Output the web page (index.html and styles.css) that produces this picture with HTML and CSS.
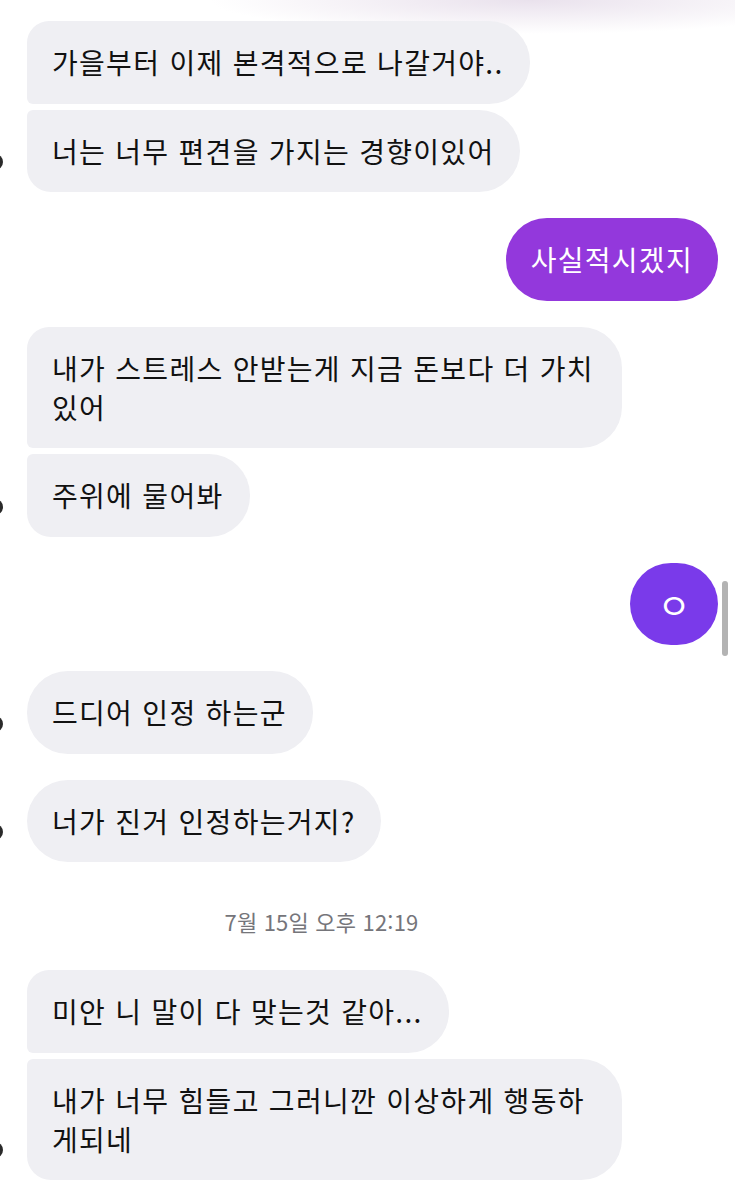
FILE: index.html
```html
<!DOCTYPE html>
<html lang="ko">
<head>
    <meta charset="UTF-8">
    <meta name="viewport" content="width=device-width, initial-scale=1.0">
    <title>메시지</title>
    <link rel="stylesheet" href="styles.css">
</head>
<body>

<div class="thread">
    <div class="row in">
        <span class="avatar blank"></span>
        <div class="bubble first">가을부터 이제 본격적으로 나갈거야..</div>
    </div>
    <div class="row in cont">
        <span class="avatar"></span>
        <div class="bubble last">너는 너무 편견을 가지는 경향이있어</div>
    </div>

    <div class="row out">
        <div class="bubble mine">사실적시겠지</div>
    </div>

    <div class="row in">
        <span class="avatar blank"></span>
        <div class="bubble first">내가 스트레스 안받는게 지금 돈보다 더 가치 있어</div>
    </div>
    <div class="row in cont">
        <span class="avatar"></span>
        <div class="bubble last">주위에 물어봐</div>
    </div>

    <div class="row out">
        <div class="bubble mine dot">ㅇ</div>
    </div>

    <div class="row in">
        <span class="avatar"></span>
        <div class="bubble">드디어 인정 하는군</div>
    </div>

    <div class="row in">
        <span class="avatar"></span>
        <div class="bubble">너가 진거 인정하는거지?</div>
    </div>

    <div class="stamp">7월 15일 오후 12:19</div>

    <div class="row in">
        <span class="avatar blank"></span>
        <div class="bubble first">미안 니 말이 다 맞는것 같아...</div>
    </div>
    <div class="row in cont">
        <span class="avatar"></span>
        <div class="bubble last">내가 너무 힘들고 그러니깐 이상하게 행동하게되네</div>
    </div>
</div>

<div class="scrollbar"></div>

</body>
</html>
```

FILE: styles.css
```css
body, html {
    margin: 0;
    padding: 0;
    background: #fff;
    font-family: "Noto Sans CJK KR", "Noto Sans", sans-serif;
    color: #111;
    overflow: hidden;
}
body {
    background: radial-gradient(ellipse 320px 34px at 72% 0, rgba(228, 218, 232, 0.8), rgba(255, 255, 255, 0) 100%), #fff;
    min-height: 1199px;
}
.thread {
    display: flex;
    flex-direction: column;
    padding-top: 21px;
}
.row {
    display: flex;
    align-items: flex-end;
    margin-top: 26px;
}
.row:first-child {
    margin-top: 0;
}
.row.cont {
    margin-top: 6px;
}
.row.out {
    justify-content: flex-end;
    padding-right: 17px;
}
.avatar {
    flex: none;
    width: 16px;
    height: 16px;
    border-radius: 50%;
    background: #2a2a2a;
    margin-left: -13px;
    margin-right: 24px;
    margin-bottom: 22px;
}
.avatar.blank {
    visibility: hidden;
}
.bubble {
    max-width: 544px;
    padding: 22px 26px 21.5px 25px;
    font-size: 28px;
    letter-spacing: 1.3px;
    line-height: 39px;
    background: #efeff3;
    border-radius: 41px;
}
.bubble.first {
    border-radius: 22px 41px 41px 6px;
}
.bubble.last {
    border-radius: 6px 41px 41px 24px;
}
.bubble.mine {
    background: #9338dc;
    color: #fff;
    padding: 22px 25px 21.5px;
}
.bubble.dot {
    background: #7a3aea;
    min-width: 38px;
    text-align: center;
    font-size: 36px;
    letter-spacing: 0;
}
.stamp {
    margin: 47px 0 11px;
    padding-right: 92px;
    text-align: center;
    font-size: 22px;
    letter-spacing: 0.2px;
    line-height: 24px;
    color: #75757a;
}
.scrollbar {
    position: fixed;
    top: 581px;
    right: 7px;
    width: 6px;
    height: 75px;
    border-radius: 3px;
    background: #b3b3b3;
}
```
